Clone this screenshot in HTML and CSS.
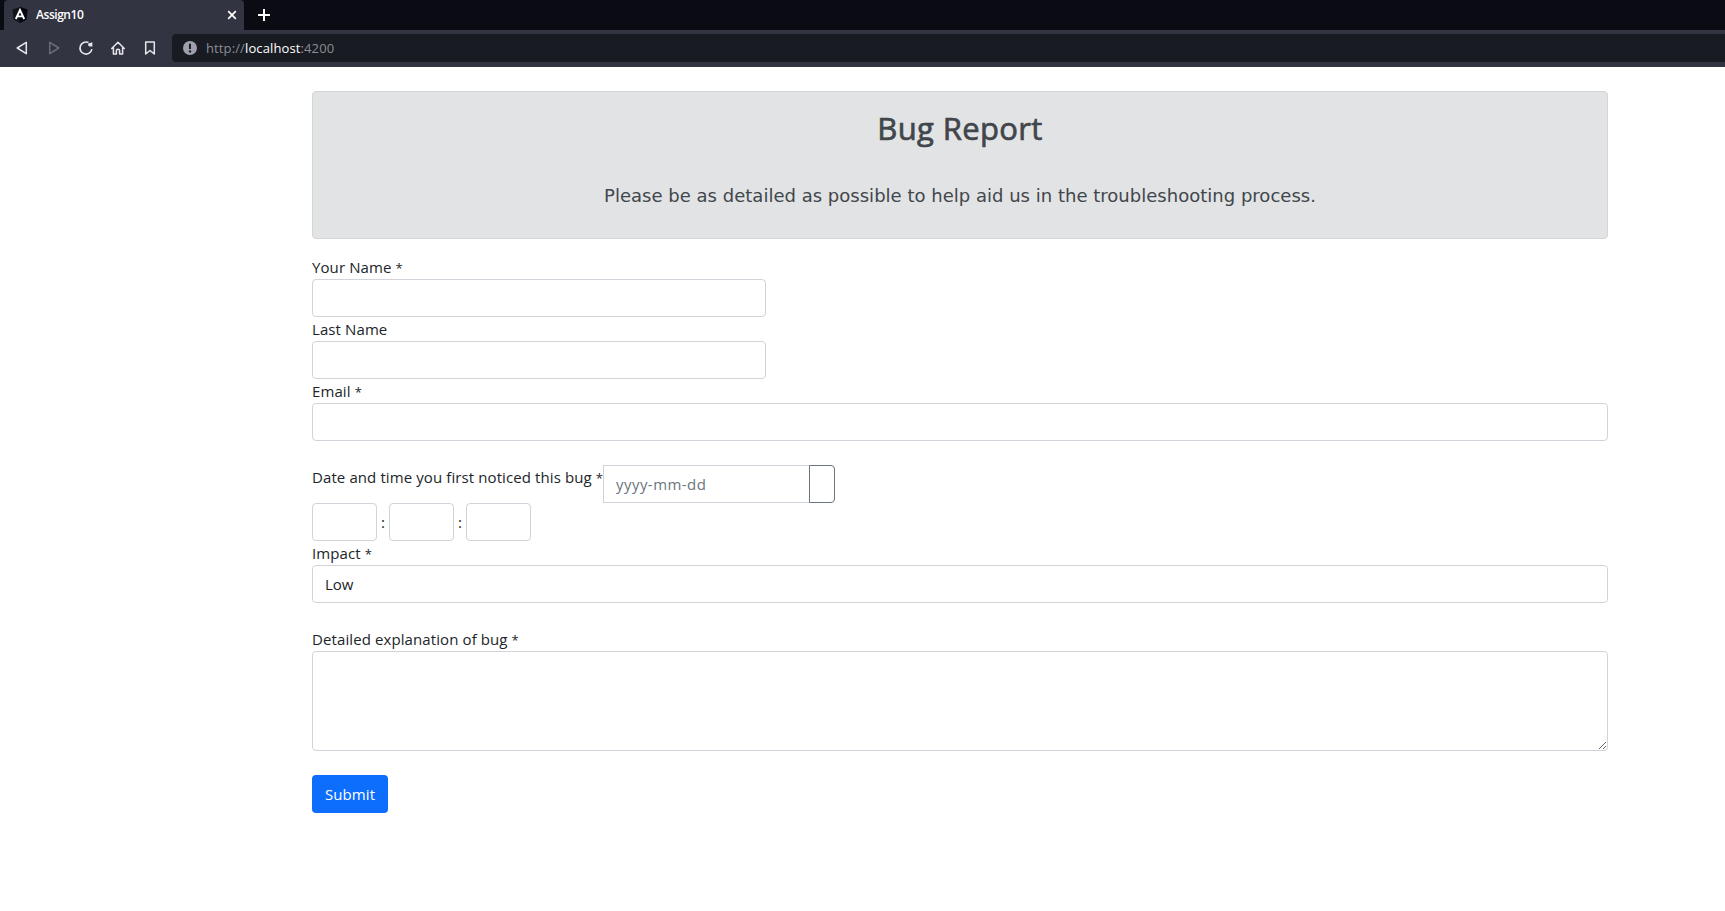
FILE: index.html
```html
<!DOCTYPE html>
<html lang="en">
<head>
<meta charset="utf-8">
<title>Assign10</title>
<link rel="stylesheet" href="styles.css">
</head>
<body>
<header class="browser">
  <div class="tabstrip">
    <div class="tab">
      <svg class="favicon" width="16" height="16" viewBox="0 0 16 16"><path d="M8 0L15.500 2.600L14.400 12.400L8 16L1.600 12.400L.5 2.600Z" fill="#10131b"/><path d="M8 0L15.500 2.600L14.400 12.400L8 16Z" fill="#050710"/><path d="M3.800 12L8 3L12.200 12M5.500 9.400H10.500" fill="none" stroke="#fff" stroke-width="1.900"/></svg>
      <span class="tab-title">Assign10</span>
      <svg class="tab-close" width="10" height="10" viewBox="0 0 10 10"><path d="M1.200 1.200L8.800 8.800M8.800 1.200L1.200 8.800" stroke="#fff" stroke-width="1.700"/></svg>
    </div>
    <svg class="new-tab" width="12" height="12" viewBox="0 0 12 12"><path d="M6 0V12M0 6H12" stroke="#fff" stroke-width="2"/></svg>
  </div>
  <div class="toolbar">
    <nav class="nav">
      <svg width="16" height="16" viewBox="0 0 16 16"><path d="M12.300 2.300V13.700L3.200 8Z" fill="none" stroke="#e6e7ea" stroke-width="1.500" stroke-linejoin="round"/></svg>
      <svg width="16" height="16" viewBox="0 0 16 16"><path d="M3.700 2.300V13.700L12.800 8Z" fill="none" stroke="#6b6e7a" stroke-width="1.500" stroke-linejoin="round"/></svg>
      <svg width="16" height="16" viewBox="0 0 16 16"><path d="M10.500 2.600A6 6 0 1 0 13.900 9.200" fill="none" stroke="#e6e7ea" stroke-width="1.600"/><path d="M10.300 3.600L14.400 2.200V6.600H11.500L10 5.200Z" fill="#e6e7ea"/></svg>
      <svg width="16" height="16" viewBox="0 0 16 16"><path d="M1.700 8.500L8 2.300L14.300 8.500M3.400 7.500V14H6.400V10.500Q6.400 9.200 8 9.200T9.600 10.500V14H12.600V7.500" fill="none" stroke="#e6e7ea" stroke-width="1.500" stroke-linejoin="round" stroke-linecap="round"/></svg>
      <svg width="16" height="16" viewBox="0 0 16 16"><path d="M3.700 2H12.300V14L8 10.500L3.700 14Z" fill="none" stroke="#e6e7ea" stroke-width="1.500" stroke-linejoin="round"/></svg>
    </nav>
    <div class="address">
      <svg width="14" height="14" viewBox="0 0 14 14"><circle cx="7" cy="7" r="7" fill="#9da0aa"/><path d="M7 2.800V8" stroke="#181b22" stroke-width="2"/><circle cx="7" cy="10.400" r="1.200" fill="#181b22"/></svg>
      <span class="url">http://<b class="host">localhost</b>:4200</span>
    </div>
  </div>
</header>
<main class="page">
  <section class="banner">
    <h2 class="title">Bug Report</h2>
    <p class="lead">Please be as detailed as possible to help aid us in the troubleshooting process.</p>
  </section>
  <form class="form">
    <label class="label">Your Name <span class="star">*</span></label>
    <input class="control short">
    <label class="label">Last Name</label>
    <input class="control short">
    <label class="label">Email <span class="star">*</span></label>
    <input class="control">
    <div class="date-row">
      <label class="label date-label">Date and time you first noticed this bug <span class="star">*</span></label>
      <input class="control date" placeholder="yyyy-mm-dd">
      <button class="picker" type="button" aria-label="Calendar"></button>
    </div>
    <div class="time-row">
      <input class="control time"><span class="colon">:</span><input class="control time"><span class="colon">:</span><input class="control time">
    </div>
    <label class="label">Impact <span class="star">*</span></label>
    <select class="control"><option>Low</option></select>
    <label class="label detail-label">Detailed explanation of bug <span class="star">*</span></label>
    <textarea class="control area"></textarea>
    <button class="submit" type="button">Submit</button>
  </form>
</main>
</body>
</html>
```
FILE: styles.css
```css
* { box-sizing: border-box; }
body { margin: 0; background: #fff; color: #212529; font: 15px/24px "Open Sans", sans-serif; }
svg { display: block; flex: none; }
.browser { height: 67px; background: #323442; }
.tabstrip { display: flex; align-items: center; height: 30px; padding-left: 4px; background: #0b0b14; }
.tab { display: flex; align-items: center; width: 240px; height: 30px; padding: 0 7px 0 8px; border-radius: 4px 4px 0 0; background: #323442; }
.tab-title { flex: 1; margin-left: 8px; color: #fff; font-size: 12px; font-weight: 600; letter-spacing: -0.450px; }
.new-tab { margin-left: 14px; }
.toolbar { display: flex; height: 37px; padding: 4px 0 5px 14px; }
.nav { display: flex; align-items: center; gap: 16px; width: 158px; }
.address { display: flex; flex: 1; align-items: center; padding-left: 11px; border-radius: 4px 0 0 4px; background: #181b22; }
.url { margin-left: 9px; color: #8b8d95; font-size: 13px; letter-spacing: 0.120px; }
.host { color: #fff; font-weight: 400; }
.page { width: 1296px; margin: 24px 0 0 312px; }
.banner { height: 148px; padding-top: 16px; border: 1px solid #d3d6d8; border-radius: 4px; background: #e2e3e5; color: #41464b; text-align: center; }
.title { margin: 0; font-size: 31px; font-weight: 400; line-height: 40px; letter-spacing: 0.350px; -webkit-text-stroke: 0.700px #41464b; }
.lead { margin: 34px 0 0; font: 18px/27px "DejaVu Sans", sans-serif; letter-spacing: 0.015px; }
.form { display: flex; flex-direction: column; align-items: flex-start; padding-top: 16px; }
.label { height: 24px; letter-spacing: 0.100px; white-space: nowrap; }
.star { font-size: 13px; }
.control { display: block; width: 100%; height: 38px; padding: 6px 12px; border: 1px solid #ced4da; border-radius: 4px; background: #fff; color: #212529; font: inherit; appearance: none; outline: 0; }
.control::placeholder { color: #6c757d; opacity: 1; letter-spacing: 0.450px; }
.short { width: 454px; }
.date-row { display: flex; margin-top: 24px; }
.date-label { width: 291px; }
.date { width: 207px; border-radius: 0; }
.picker { width: 26px; height: 38px; margin-left: -1px; border: 1px solid #6c757d; border-radius: 0 4px 4px 0; background: #fff; }
.time-row { display: flex; align-items: center; }
.time { width: 65px; }
.colon { width: 12px; text-align: center; }
.detail-label { margin-top: 24px; }
.area { height: 100px; resize: vertical; }
.submit { width: 76px; height: 38px; margin-top: 24px; padding: 0; border: 0; border-radius: 4px; background: #0d6efd; color: #fff; font: inherit; letter-spacing: 0.100px; }
```
